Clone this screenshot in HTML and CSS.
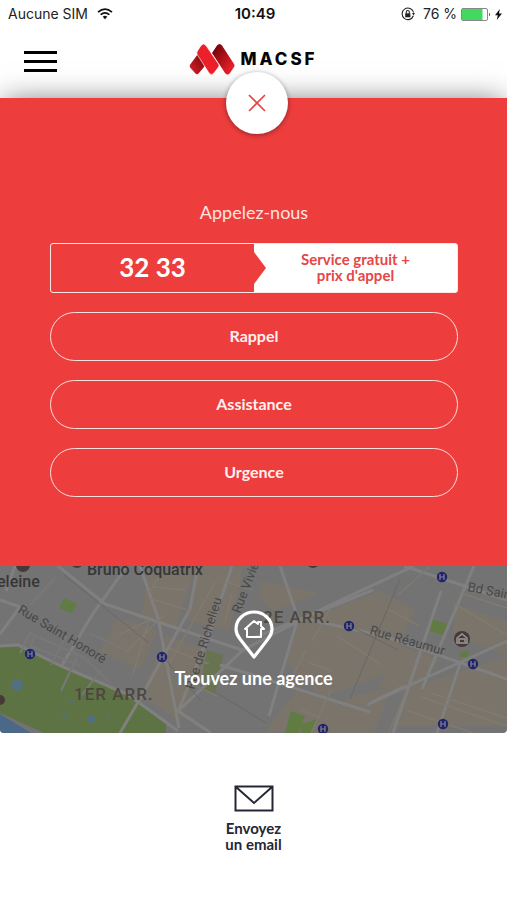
FILE: index.html
```html
<!DOCTYPE html>
<html lang="fr">
<head>
<meta charset="utf-8">
<meta name="viewport" content="width=device-width, initial-scale=1">
<title>MACSF</title>
<link rel="stylesheet" href="styles.css">
</head>
<body>
<div class="status">
  <div class="status-left">
    <span>Aucune SIM</span>
    <svg width="16" height="12" viewBox="0 0 16 12" fill="none" stroke="#111" stroke-width="1.7"><path d="M1 4.2Q8-2 15 4.2M3.6 6.7Q8 3 12.4 6.7"/><path d="M8 11.2 5.7 8.7Q8 7 10.3 8.7Z" fill="#111" stroke="none"/></svg>
  </div>
  <strong class="clock">10:49</strong>
  <div class="status-right">
    <svg class="lock" width="14" height="14" viewBox="0 0 14 14" fill="none" stroke="#222"><path d="M12.4 8.8A5.8 5.8 0 1 1 12.6 5.5" stroke-width="1.1"/><path d="M11 6h3l-1.5 2.4z" fill="#222" stroke="none"/><path d="M4.2 6.3h5.2v4H4.2z" fill="#222" stroke="none"/><path d="M5.3 6.5V5a1.5 1.5 0 0 1 3 0v1.5" stroke-width="1.1"/></svg>
    <span>76 %</span>
    <svg width="30" height="13" viewBox="0 0 30 13"><rect x=".5" y=".5" width="26" height="12" rx="1.5" fill="#fff" stroke="#888"/><path d="M1 1h20.500v11H1z" fill="#43d860"/><path d="M28 4.500q2 2 0 4z" fill="#555"/></svg>
    <svg class="bolt" width="7" height="11" viewBox="0 0 7 11"><path d="M4.800 0 0 6.200h2.800L1.800 11 7 4.500H4z" fill="#111"/></svg>
  </div>
</div>
<header class="header">
  <button class="menu" aria-label="Menu"><span></span><span></span><span></span></button>
  <a class="logo" href="#" aria-label="MACSF">
    <svg width="46" height="32" viewBox="0 0 46 32">
      <defs>
        <linearGradient id="left" x1="1" y1="0" x2="0" y2="1"><stop offset=".25" stop-color="#8d0d12"/><stop offset="1" stop-color="#e51f29"/></linearGradient>
        <linearGradient id="right" x1="0" y1="0" x2="1" y2="1"><stop offset=".15" stop-color="#790508"/><stop offset=".8" stop-color="#e51f29"/></linearGradient>
      </defs>
      <path d="M9 11 15 21q1 1.500 0 3l-5 6q-2 2.500-4 0L1.500 25q-1.500-2 0-4z" fill="url(#left)"/>
      <path d="M28 2.500Q30.500-.5 33 2.500L45 21q1 1.500 0 3l-4 6q-2.500 3-5 0L23 10z" fill="url(#right)"/>
      <path d="M12 2.500Q14.500-.5 17 2.500L29.500 21q1 1.500 0 3L25 30q-2.500 3-5 0L8.500 12q-1.500-2 0-4z" fill="#ec202a" stroke="#fff" stroke-width=".6"/>
    </svg>
    <span>MACSF</span>
  </a>
</header>
<main>
  <section class="call">
    <button class="close" aria-label="Fermer"><svg width="18" height="18" viewBox="0 0 18 18" stroke="#e94343" stroke-width="1.7"><path d="m1 1 16 16M17 1 1 17"/></svg></button>
    <h1>Appelez-nous</h1>
    <a class="phone" href="tel:3233"><span class="number">32 33</span><span class="price">Service gratuit +<br>prix d'appel</span></a>
    <button class="pill">Rappel</button>
    <button class="pill">Assistance</button>
    <button class="pill">Urgence</button>
  </section>
  <a class="agency" href="#">
    <svg class="map" viewBox="0 0 507 167" preserveAspectRatio="xMidYMid slice" aria-hidden="true">
      <defs><g id="metro"><circle r="5.200" fill="#22246a"/><path d="M-2-3v6M2-3v6M-2 0h4" stroke="#858592" stroke-width="1.200"/></g></defs>
      <path fill="#737373" d="M0 0h507v167H0z"/>
      <g fill="#7a746b">
        <path d="m148 5 48-5-20 62-35-9zM200 0h44l-15 64-44-10zM118 52l40 12-17 39-42-17zM166 69l47 17-33 70-39-28zM300 55l80-30 35 18-28 65-67 24-36-38zM260 15l60 12-45 18-15-10zM400 80l40 13-28 33-34-4zM410 122l97-32v70H390zM454 38l53 17v35l-53-22zM295 125l45 12-24 29h-51zM351 130l40-8-17 45h-64z"/>
      </g>
      <path fill="#5e7344" d="M0 80h18l46 22 62 26 40 30v9H44L0 147z"/>
      <path fill="#617c43" d="m64 32 13 6-5 9-13-5zM431 53l16 5-4 11-13-4zM291 145l14 5-6 17h-14zM301 159l17-7-7 15h-10zM460 87l9-3-1 7h-9z"/>
      <path fill="#67744f" d="m207 84 16 5-8 40-15-6z"/>
      <path fill="#4c6888" d="m0 148 31 19H0z"/>
      <g fill="#52717f"><circle cx="17" cy="119" r="6"/><circle cx="91" cy="153" r="4"/><path d="m62 147 6 3-2 2-5-3zM106 147l5 2-2 3zM69 134l5 1-3 3z"/></g>
      <g fill="none" stroke="#808080" stroke-width="3">
        <path d="m0 80 18-1 45 22 64 27 51 37M0 34l20 7M20 41 0 68M15 0l-9 25M61 101l31-52L127 0M58 0l47 38 65 22 75 25M140 0l18 52 21 110M198 0l-8 43-49 88-21 36M232 0l-22 66-32 80"/>
        <path d="m178 145 65-61 85-44 86-40M178 145l33 22M220 99l33 10 117 37M370 137l35-17M280 0l18 52-29 98M253 72l120-48M404 0l103 34M441 25l-48 142M474 0l-20 47-32 76M367 139l63-29 77-35M460 98l-23 69M310 54l74 16 123 43"/>
      </g>
      <g fill="none" stroke="#807a70" stroke-width="1.500">
        <path d="m119 69 30-15-16 54M125 87l39-38M148 32l44 13M153 21l32 3M166 0l-17 27M166 104l49-88M170 83l39 15M184 114l33 16M223 15l30 9M232 27l-7 29M398 29l32-29M386 42l33 18M306 84l-14 28M330 43l-18 32M337 70l45 29M310 97l22 8M301 144l19 8M331 124l-20 43M406 125l-17 42M408 145l65 22M421 131l86 29M431 127l76 25M453 37l54 32M460 27l47 15"/>
      </g>
      <g fill="none" stroke="#686868" stroke-width="1"><path d="m64 9 66 53 19 15M163 91l38 44M217 127l49 30M400 13l-50 120M344 57l54 27"/></g>
      <g fill="none" stroke="#787878" stroke-width="2"><path d="m20 87 10-20 55 25 25 25M31 80l50 20M35 70l-9 22M66 70l-15 29M77 91l-16 34M101 104l-19 25M30 39l25-27M89 67l35 16"/></g>
      <g fill="#473936"><circle cx="23" cy="-1" r="7"/><circle cx="77" cy="-4" r="6"/><circle cx="313" cy="-4" r="6"/><circle cx="0" cy="134" r="5"/><circle cx="462" cy="73" r="8"/></g>
      <path d="m457 72 5-4 5 4v5h-10zM459 76v-3h6v3" fill="none" stroke="#999" stroke-width="1.500"/>
      <g class="street">
        <text x="87" y="9" class="place">Bruno Coquatrix</text><text x="-3" y="21" class="place">eleine</text>
        <text transform="translate(17 46) rotate(31)">Rue Saint Honoré</text>
        <text transform="translate(194 124) rotate(-73)">Rue de Richelieu</text>
        <text transform="translate(240 48) rotate(-69)">Rue Vivienne</text>
        <text transform="translate(369 68) rotate(16)">Rue Réaumur</text>
        <text transform="translate(467 25) rotate(11)">Bd Saint</text>
      </g>
      <g class="district"><text x="74" y="134">1ER ARR.</text><text x="263" y="57">2E ARR.</text></g>
      <use href="#metro" x="30" y="88"/><use href="#metro" x="162" y="91"/><use href="#metro" x="349" y="60"/><use href="#metro" x="442" y="11"/><use href="#metro" x="473" y="98"/><use href="#metro" x="323" y="163"/><use href="#metro" x="443" y="158"/>
    </svg>
    <span class="agency-label">
      <svg width="40" height="50" viewBox="0 0 40 50" fill="none" stroke="#fff" stroke-width="3.200" stroke-linejoin="round"><path d="M20 47 6 29Q2 24 2 19a18 17 0 0 1 36 0q0 5-4 10z"/><path d="m11 19 9-8 4 3v-2h3v4l3 3h-3v8H13v-8z" stroke-width="2"/></svg>
      <span>Trouvez une agence</span>
    </span>
  </a>
  <a class="email" href="#">
    <svg width="40" height="27" viewBox="0 0 40 27" fill="none" stroke="#262734" stroke-width="2"><path d="M1.500 1.500h37v24h-37zM2 2l18 16L38 2"/></svg>
    <span>Envoyez<br>un email</span>
  </a>
</main>
</body>
</html>
```
FILE: styles.css
```css
* { box-sizing: border-box; }
body { margin: 0; min-height: 100vh; background: #fff; color: #262734; font-family: Lato, "Open Sans", sans-serif; }
button { padding: 0; font: inherit; cursor: pointer; }
a { color: inherit; text-decoration: none; }
svg { display: block; flex-shrink: 0; }

.status { display: grid; grid-template-columns: 1fr auto 1fr; align-items: center; height: 28px; padding: 0 5px 0 8px; color: #222; font: 14px/20px Inter, sans-serif; }
.status-left, .status-right { display: flex; align-items: center; gap: 9px; }
.status-right { justify-content: flex-end; gap: 4px; }
.lock { margin-right: 4px; }
.clock { font-size: 15px; font-weight: 600; color: #111; }

.header { display: grid; grid-template-columns: 1fr auto 1fr; align-items: center; height: 70px; padding: 0 24px 8px; }
.menu { display: flex; flex-direction: column; gap: 6px; width: 33px; padding-top: 4px; border: 0; background: none; }
.menu span { height: 3px; width: 100%; background: #000; }
.logo { display: flex; align-items: center; gap: 5px; color: #050505; font: 800 17px/24px Inter, sans-serif; letter-spacing: 3px; }

.call { position: relative; display: flex; flex-direction: column; gap: 19px; padding: 103px 49px 69px 50px; background: #ed3d3d; box-shadow: 0 0 28px -4px rgba(0, 0, 0, .6); color: #fff; }
.close { position: absolute; top: -26px; left: 50%; display: grid; place-items: center; width: 62px; height: 62px; margin-left: -28px; border: 0; border-radius: 50%; background: #fff; box-shadow: 0 1px 5px rgba(0, 0, 0, .4); }
h1 { margin: 0; text-align: center; font-size: 18px; line-height: 23px; font-weight: 400; color: #ffe3e0; }
.phone { display: grid; grid-template-columns: 1fr 1fr; height: 50px; border: 1px solid #ffe8e6; border-radius: 3px; background: #fff; overflow: hidden; text-align: center; }
.number { position: relative; display: grid; place-items: center; padding-bottom: 2px; background: #ed3d3d; font-size: 26px; font-weight: 700; }
.number::after { content: ""; position: absolute; left: 100%; top: 8px; border: solid transparent; border-width: 16px 0 16px 12px; border-left-color: #ed3d3d; }
.price { align-self: center; padding-bottom: 2px; color: #e64646; font-size: 15px; line-height: 16px; font-weight: 700; }
.pill { height: 49px; padding-bottom: 2px; border: 1px solid #ffe0dd; border-radius: 25px; background: none; color: #fff0ee; font-size: 16px; line-height: 22px; font-weight: 700; }

.agency { position: relative; display: grid; height: 167px; overflow: hidden; border-radius: 0 0 4px 4px; color: #fff; }
.map, .agency-label { grid-area: 1 / 1; }
.map { width: 100%; height: 167px; }
.street { font: 13px Roboto, sans-serif; fill: #484848; }
.place { font-size: 16px; font-weight: 500; fill: #363636; }
.district { font: 500 17px Roboto, sans-serif; letter-spacing: 1px; fill: #4d4740; }
.agency-label { position: relative; display: flex; flex-direction: column; align-items: center; gap: 7px; padding-top: 44px; font-size: 18px; line-height: 22px; font-weight: 700; }

.email { display: flex; flex-direction: column; align-items: center; gap: 8px; padding: 52px 0 46px; text-align: center; font-size: 15px; line-height: 16px; font-weight: 700; }
```
